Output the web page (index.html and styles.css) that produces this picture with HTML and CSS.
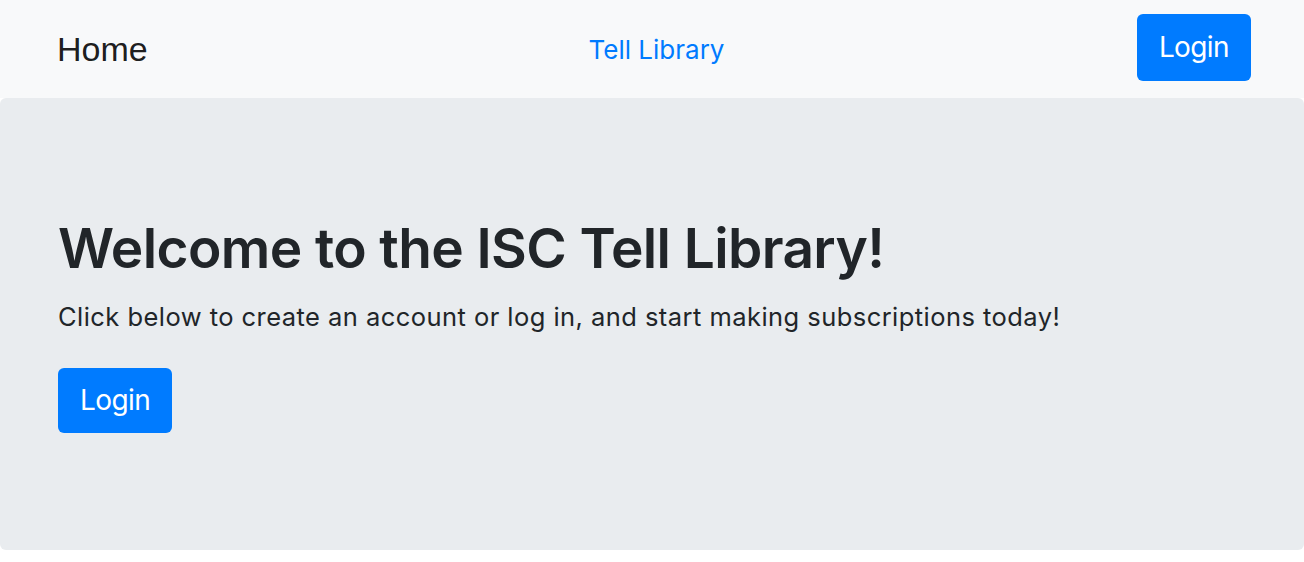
FILE: index.html
```html
<!DOCTYPE html>
<html lang="en">
<head>
<meta charset="utf-8">
<title>ISC Tell Library</title>
<link rel="stylesheet" href="styles.css">
</head>
<body>
<header class="navbar">
  <a class="brand" href="#">Home</a>
  <a class="nav-link" href="#">Tell Library</a>
  <div class="nav-right"><a class="btn btn-nav" href="#">Login</a></div>
</header>
<main class="jumbotron">
  <h1 class="title">Welcome to the ISC Tell Library!</h1>
  <p class="lead">Click below to create an account or log in, and start making subscriptions today!</p>
  <a class="btn" href="#">Login</a>
</main>
</body>
</html>
```
FILE: styles.css
```css
* { box-sizing: border-box; }
html, body { margin: 0; padding: 0; }
body {
  font-family: Inter, "Noto Sans", sans-serif;
  color: #212529;
  background: #fff;
}
a { text-decoration: none; }
.navbar {
  display: grid;
  grid-template-columns: 1fr auto 1fr;
  align-items: center;
  height: 98px;
  padding: 0 53px 0 57px;
  background: #f8f9fa;
}
.brand {
  justify-self: start;
  font-family: "Liberation Sans", Arial, sans-serif;
  font-size: 34px;
  color: rgba(0,0,0,.9);
}
.nav-link {
  font-size: 26px;
  color: #007bff;
  padding-left: 5px;
}
.nav-right { justify-self: end; display: flex; }
.btn {
  display: inline-block;
  background: #007bff;
  color: #fff;
  font-size: 28px;
  letter-spacing: -0.6px;
  line-height: 41px;
  padding: 12px 22px;
  border-radius: 6px;
}
.btn-nav {
  padding-top: 13px;
  padding-bottom: 13px;
  margin-top: -3px;
}
.jumbotron {
  background: #e9ecef;
  border-radius: 6px;
  padding: 117px 58px 117px;
  margin-bottom: 13px;
}
.title {
  margin: 0 0 17px;
  font-size: 55px;
  font-weight: 600;
  letter-spacing: -0.6px;
  line-height: 66px;
}
.lead {
  margin: 0 0 32px;
  font-size: 25.5px;
  letter-spacing: 0.45px;
  line-height: 38px;
}
```
